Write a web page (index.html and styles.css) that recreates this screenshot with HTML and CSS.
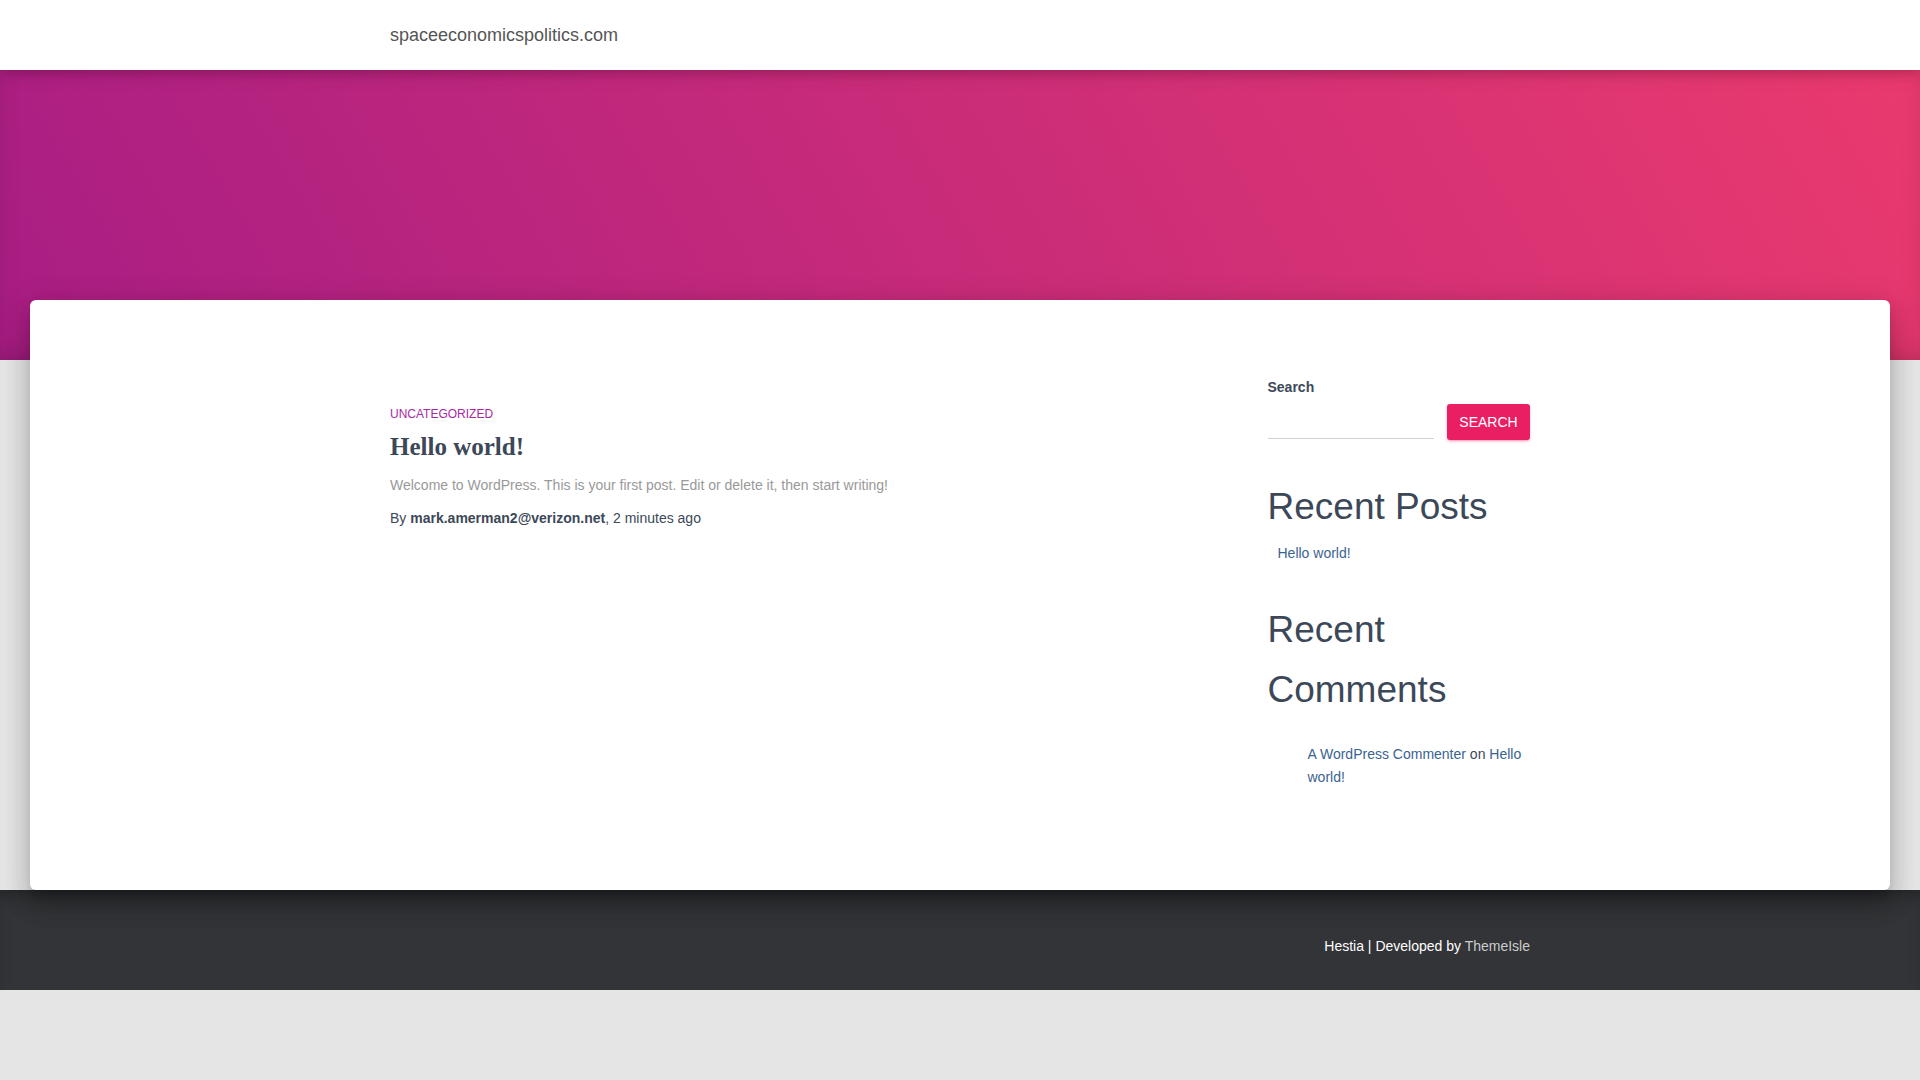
FILE: index.html
```html
<!DOCTYPE html>
<html lang="en">
<head>
<meta charset="utf-8">
<title>spaceeconomicspolitics.com</title>
<link rel="stylesheet" href="styles.css">
</head>
<body>
<nav class="navbar">
  <div class="container">
    <a class="brand" href="#">spaceeconomicspolitics.com</a>
  </div>
</nav>
<header class="hero"></header>
<main class="card">
  <div class="container grid">
    <section class="posts">
      <article class="post">
        <a class="category" href="#">UNCATEGORIZED</a>
        <h2 class="post-title"><a href="#">Hello world!</a></h2>
        <p class="excerpt">Welcome to WordPress. This is your first post. Edit or delete it, then start writing!</p>
        <p class="byline">By <b>mark.amerman2@verizon.net</b>, 2 minutes ago</p>
      </article>
    </section>
    <aside class="sidebar">
      <div class="widget search-widget">
        <label class="search-label">Search</label>
        <div class="search-row">
          <input class="search-input" type="text">
          <button class="search-btn">SEARCH</button>
        </div>
      </div>
      <div class="widget">
        <h2 class="widget-title">Recent Posts</h2>
        <ul class="recent-posts">
          <li><a href="#">Hello world!</a></li>
        </ul>
      </div>
      <div class="widget">
        <h2 class="widget-title">Recent Comments</h2>
        <ul class="recent-comments">
          <li><a href="#">A WordPress Commenter</a> on <a href="#">Hello world!</a></li>
        </ul>
      </div>
    </aside>
  </div>
</main>
<footer class="footer">
  <div class="container footer-inner">
    <span class="copyright">Hestia | Developed by <a href="#">ThemeIsle</a></span>
  </div>
</footer>
</body>
</html>
```
FILE: styles.css
```css
* { box-sizing: border-box; }
html, body { margin: 0; padding: 0; }
body {
  background: #e5e5e5;
  font-family: "Liberation Sans", Arial, sans-serif;
  color: #3c4858;
  font-size: 14px;
  height: 1080px;
  overflow: hidden;
}
a { text-decoration: none; }
.container {
  width: 1140px;
  margin: 0 auto;
}
.navbar {
  position: relative;
  z-index: 3;
  height: 70px;
  background: #fff;
  box-shadow: 0 4px 18px 0 rgba(0,0,0,0.12), 0 7px 10px -5px rgba(0,0,0,0.15);
}
.navbar .container { height: 70px; display: flex; align-items: center; }
.brand {
  color: #555;
  font-size: 18px;
  line-height: 20px;
  margin-top: -1px;
}
.hero {
  height: 290px;
  background: linear-gradient(60deg, #a81d84 0%, #ea3a6e 100%);
  box-shadow: inset 0 -10px 30px -12px rgba(0,0,0,0.25);
}
.card {
  position: relative;
  z-index: 2;
  margin: -60px 30px 0;
  height: 590px;
  background: #fff;
  border-radius: 6px;
  box-shadow: 0 16px 24px 2px rgba(0,0,0,0.14), 0 6px 30px 5px rgba(0,0,0,0.12), 0 8px 10px -5px rgba(0,0,0,0.2);
}
.grid {
  display: grid;
  grid-template-columns: 750px 262.5px;
  justify-content: space-between;
}
.posts { padding-top: 106px; }
.category {
  display: block;
  color: #a72aa2;
  font-size: 12px;
  line-height: 16px;
}
.post-title {
  margin: 8.5px 0 0;
  font-family: "Liberation Serif", "Times New Roman", serif;
  font-weight: 700;
  font-size: 25px;
  line-height: 32px;
}
.post-title a { color: #3c4858; }
.excerpt {
  margin: 11.5px 0 0;
  color: #999;
  font-size: 14px;
  line-height: 22px;
}
.byline {
  margin: 11px 0 0;
  color: #3c4858;
  font-size: 14px;
  line-height: 22px;
}
.sidebar { padding-top: 77px; }
.search-label {
  display: block;
  font-weight: 700;
  font-size: 14px;
  line-height: 20px;
}
.search-row {
  display: flex;
  justify-content: space-between;
  align-items: flex-start;
  margin-top: 7px;
}
.search-input {
  width: 166px;
  height: 36px;
  border: 0;
  border-bottom: 1px solid #d2d2d2;
  background: transparent;
  outline: none;
  margin-top: -1px;
}
.search-btn {
  width: 83px;
  height: 36px;
  border: 0;
  border-radius: 3px;
  background: #e91e63;
  color: #fff;
  font-family: "Liberation Sans", Arial, sans-serif;
  font-size: 14px;
  padding: 0;
  box-shadow: 0 2px 2px 0 rgba(233,30,99,0.14), 0 3px 1px -2px rgba(233,30,99,0.2), 0 1px 5px 0 rgba(233,30,99,0.12);
}
.widget-title {
  margin: 37px 0 0;
  font-weight: 400;
  font-size: 37px;
  line-height: 60px;
  color: #3c4858;
}
ul { list-style: none; margin: 0; padding: 0; }
.recent-posts { margin-top: 6px; padding-left: 10px; }
.recent-posts li { line-height: 20px; }
.recent-posts a, .recent-comments a { color: #3a6391; }
.recent-comments { margin-top: 23px; padding-left: 40px; }
.recent-comments li { line-height: 23px; color: #3c4858; }
.footer {
  position: relative;
  z-index: 1;
  height: 100px;
  background: #323437;
  box-shadow: inset 0 12px 20px -10px rgba(0,0,0,0.35);
}
.footer-inner {
  height: 100px;
  display: flex;
  justify-content: flex-end;
  align-items: center;
}
.copyright {
  color: #fff;
  font-size: 14px;
  line-height: 20px;
  margin-top: 11px;
}
.copyright a { color: #ccc; }
```
